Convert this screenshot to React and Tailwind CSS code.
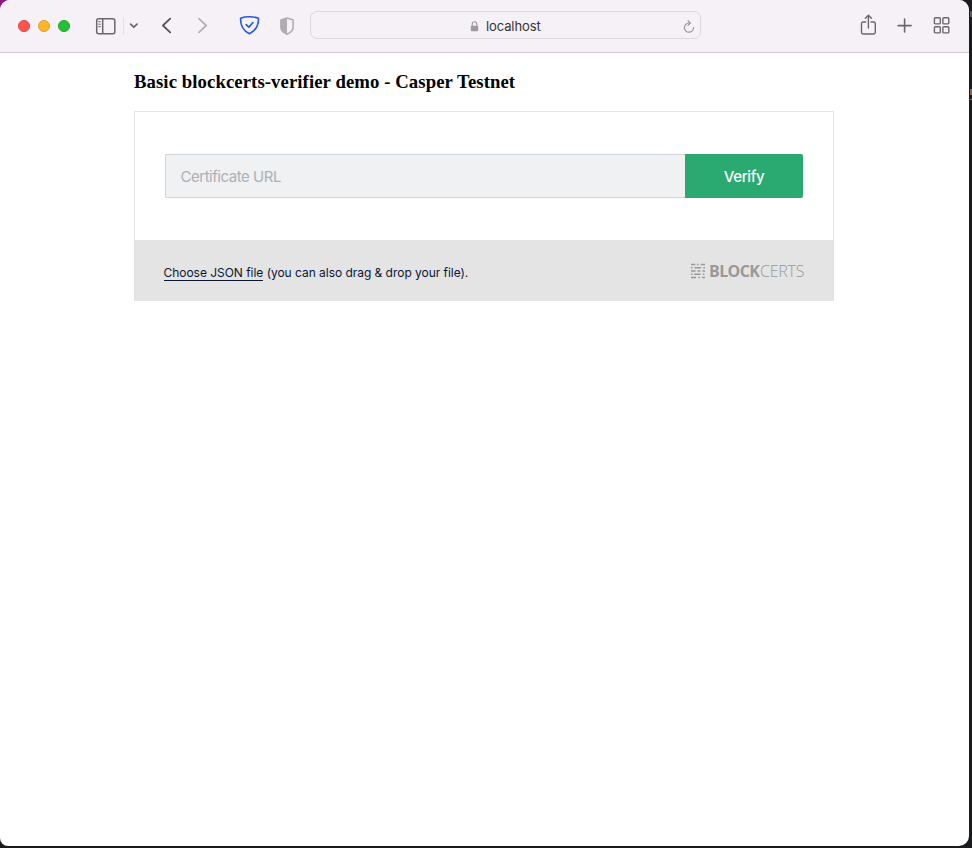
function TrafficLights() {
  return (
    <div className="mt-[2px] ml-[18px] flex gap-2">
      <span className="size-3 rounded-full border border-[#e0443e] bg-[#ff544d]" />
      <span className="size-3 rounded-full border border-[#dea032] bg-[#ffb429]" />
      <span className="size-3 rounded-full border border-[#1da62c] bg-[#24c138]" />
    </div>
  );
}

function SidebarIcon() {
  return (
    <svg className="mt-px ml-[25px]" width="22" height="18" viewBox="0 0 22 18" fill="none" stroke="#6a666b" strokeWidth="1.5">
      <rect x="1.7" y="1.7" width="18.1" height="15" rx="2" />
      <path d="M7.7 1.7v15" />
      <path d="M3.4 4.7h2.4M3.4 7.2h2.4M3.4 9.7h2.4" strokeWidth="1" />
    </svg>
  );
}

function TrackerShield() {
  return (
    <svg className="ml-[31px]" width="21" height="20" viewBox="0 0 21 20" fill="none" stroke="#2458dc" strokeWidth="1.6" strokeLinecap="round" strokeLinejoin="round">
      <path d="M10.5 1.8C7.5 1.8 4.2 2.2 1.6 3.2c-.3 5.5 2.1 12 8.9 15.6 6.8-3.6 9.2-10.1 8.9-15.6-2.6-1-5.9-1.4-8.9-1.4Z" />
      <path d="m7.2 9.6 2.7 2.5L14 7.5" />
    </svg>
  );
}

function PrivacyShield() {
  return (
    <svg className="mt-px ml-5" width="14" height="18" viewBox="0 0 14 18" fill="none">
      <path d="M7 1 .9 3v7.2c0 3.4 2.8 5.5 6.1 7 3.3-1.5 6.1-3.6 6.1-7V3Z" stroke="#b0acb2" strokeWidth="1.6" strokeLinejoin="round" />
      <path d="M7 1 .9 3v7.2c0 3.4 2.8 5.5 6.1 7Z" fill="#b0acb2" />
    </svg>
  );
}

function AddressBar() {
  return (
    <div className="ml-4 flex h-7 w-[391px] items-center rounded-[7px] border border-[#dcd7dd]">
      <svg className="mt-[3px] ml-[159px]" width="9" height="11" viewBox="0 0 9 11" fill="none">
        <path d="M2.2 5V3.2a2.3 2.5 0 0 1 4.6 0V5" stroke="#9e9ba0" strokeWidth="1.1" />
        <rect x=".8" y="4.7" width="7.4" height="5.6" rx="1" fill="#9e9ba0" />
      </svg>
      <span className="mt-[2px] ml-[7px] w-[55px] text-[13px] leading-5 tracking-[-0.11px] whitespace-nowrap text-[#353336]">localhost</span>
      <svg className="mt-[3px] ml-[142px]" width="12" height="13" viewBox="0 0 12 13" fill="none" stroke="#98949a" strokeWidth="1.2" strokeLinecap="round" strokeLinejoin="round">
        <path d="M6.7 3H6a4.6 4.6 0 1 0 4.6 4.6" />
        <path d="m5 .8 2.4 2.3L5 5.4" />
      </svg>
    </div>
  );
}

function Toolbar() {
  return (
    <header className="flex h-[53px] items-center border-b border-[#d0ccd0] bg-[#f6f1f7] pb-[2px]">
      <TrafficLights />
      <SidebarIcon />
      <span className="mt-px ml-[6px] h-[18px] w-px bg-[#e4dfe5]" />
      <svg className="mt-[2px] ml-[5px]" width="10" height="8" viewBox="0 0 10 8" fill="none" stroke="#6a666b" strokeWidth="1.7" strokeLinecap="round" strokeLinejoin="round">
        <path d="M1.6 2.2 4.8 5.2 8 2.2" />
      </svg>
      <svg className="ml-[21px]" width="12" height="18" viewBox="0 0 12 18" fill="none" stroke="#575359" strokeWidth="1.8" strokeLinecap="round" strokeLinejoin="round">
        <path d="M10.2 2.7 2.9 9.5l7.3 6.8" />
      </svg>
      <svg className="ml-6" width="12" height="18" viewBox="0 0 12 18" fill="none" stroke="#b5b0b7" strokeWidth="1.8" strokeLinecap="round" strokeLinejoin="round">
        <path d="m2.9 2.7 7.3 6.8-7.3 6.8" />
      </svg>
      <TrackerShield />
      <PrivacyShield />
      <AddressBar />
      <svg className="ml-[159px]" width="17" height="22" viewBox="0 0 17 22" fill="none" stroke="#6a666b" strokeWidth="1.4" strokeLinecap="round" strokeLinejoin="round">
        <path d="M5.7 8H3.2a1.7 1.7 0 0 0-1.7 1.7v8.6c0 1 .7 1.7 1.7 1.7h10.4c1 0 1.7-.7 1.7-1.7V9.7c0-1-.7-1.7-1.7-1.7h-2.5" />
        <path d="M8.4 14V1.5M5.4 4.3l3-3 3 3" />
      </svg>
      <svg className="ml-[20px]" width="16" height="16" viewBox="0 0 16 16" fill="none" stroke="#6a666b" strokeWidth="1.6" strokeLinecap="round">
        <path d="M7.6 2v13M1.1 8.6h13" />
      </svg>
      <svg className="ml-[20px]" width="17" height="18" viewBox="0 0 17 18" fill="none" stroke="#6a666b" strokeWidth="1.4">
        <rect x="1.4" y="1.8" width="5.9" height="6.1" rx="1" />
        <rect x="9.9" y="1.8" width="5.9" height="6.1" rx="1" />
        <rect x="1.4" y="10.8" width="5.9" height="6.1" rx="1" />
        <rect x="9.9" y="10.8" width="5.9" height="6.1" rx="1" />
      </svg>
    </header>
  );
}

function BlockcertsLogo() {
  return (
    <div className="mt-px flex items-center text-[#999]">
      <svg width="16" height="16" viewBox="0 0 16 16" stroke="currentColor" strokeWidth="1.5">
        <path d="M1 1.4h4.3M7 1.4h1.6M10.8 1.4H15M1 4.7h1.6M4.5 4.7h6.6M13.3 4.7H15M1 8h4.6M7.5 8h2.8M12.4 8H15M1 11.3h1.6M4.2 11.3h6.3M12.8 11.3h1.6M1 14.5h5M8.4 14.5h1.6M12 14.5h3" />
      </svg>
      <span className="ml-[3px] flex font-['Open_Sans',sans-serif] text-[16px] leading-5 whitespace-nowrap">
        <span className="w-[51px] font-bold tracking-[-0.6px]">BLOCK</span>
        <span className="w-[45px] font-light tracking-[-0.25px]">CERTS</span>
      </span>
    </div>
  );
}

function Verifier() {
  return (
    <section className="mt-[17px] w-[700px] border border-[#e4e4e4]">
      <div className="flex h-32 items-center px-[30px]">
        <input
          className="h-11 w-[520px] rounded-l-[2px] border border-r-0 border-[#d0d5d9] bg-[#f0f1f3] px-[14.5px] pt-px text-[15px] tracking-[-0.47px] text-[#0b1634] outline-none placeholder:text-[#abb0b5]"
          placeholder="Certificate URL"
        />
        <button className="h-11 w-[118px] rounded-r-[2px] bg-[#2aa971] pt-[2px] text-[15px] font-medium tracking-[-0.4px] text-white">Verify</button>
      </div>
      <div className="flex h-15 items-center justify-between bg-[#e4e4e4] pr-[28px] pl-[28.5px]">
        <p className="mt-[6px] text-[12px] leading-4 tracking-[-0.035px] whitespace-nowrap text-[#0b1634]">
          <span className="border-b border-[#0b1634]">Choose JSON file</span> (you can also drag &amp; drop your file).
        </p>
        <BlockcertsLogo />
      </div>
    </section>
  );
}

export default function App() {
  return (
    <div className="flex h-[848px] w-[972px] overflow-hidden bg-[linear-gradient(135deg,#8b1a83_0px,#8b1a83_12px,#191b1d_13px)] font-[Inter,sans-serif]">
      <div className="h-[846px] w-[969px] shrink-0 overflow-hidden rounded-[10px] rounded-bl-[8px] bg-white">
        <Toolbar />
        <main className="pl-[134px]">
          <h1 className="pt-[16px] font-['Liberation_Serif',serif] text-[18.72px] leading-[25px] font-bold tracking-[0.09px] whitespace-nowrap text-black">
            Basic blockcerts-verifier demo - Casper Testnet
          </h1>
          <Verifier />
        </main>
      </div>
      {/* Sliver of the editor window behind the browser */}
      <div className="flex w-[3px] flex-col items-end">
        <span className="mt-[11px] h-[6px] w-[2px] bg-[#55585a]" />
        <span className="mt-[72px] h-[6px] w-[2px] bg-[#8d5f4c]" />
        <span className="mt-1 h-px w-[3px] bg-[#8d5f4c]" />
      </div>
    </div>
  );
}
